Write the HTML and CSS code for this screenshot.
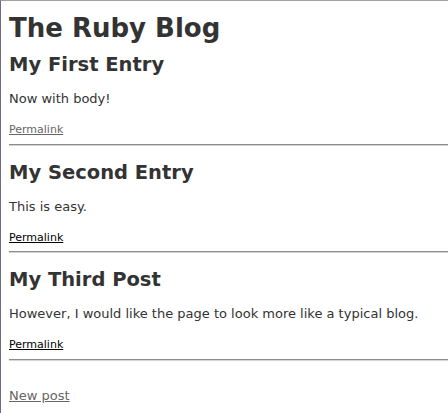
FILE: index.html
```html
<!DOCTYPE html>
<html>
<head>
<meta charset="utf-8">
<title>The Ruby Blog</title>
<link rel="stylesheet" href="styles.css">
</head>
<body>
<h1 class="title">The Ruby Blog</h1>

<div class="entry">
  <h2 class="entry-title">My First Entry</h2>
  <p class="entry-body">Now with body!</p>
  <div class="entry-link"><a class="visited" href="#">Permalink</a></div>
  <hr class="divider">
</div>

<div class="entry">
  <h2 class="entry-title">My Second Entry</h2>
  <p class="entry-body">This is easy.</p>
  <div class="entry-link"><a href="#">Permalink</a></div>
  <hr class="divider">
</div>

<div class="entry">
  <h2 class="entry-title">My Third Post</h2>
  <p class="entry-body">However, I would like the page to look more like a typical blog.</p>
  <div class="entry-link"><a href="#">Permalink</a></div>
  <hr class="divider">
</div>

<p class="new-post"><a class="visited" href="#">New post</a></p>
</body>
</html>
```

FILE: styles.css
```css
html {
  margin: 0;
  padding: 0;
  background: #fff;
}

body {
  margin: 0;
  min-height: 100vh;
  box-sizing: border-box;
  padding: 8px 0 0 8px;
  border-top: 1px solid #a0a0a0;
  border-left: 1px solid #6e6e82;
  background: #fff;
  color: #333;
  font-family: "DejaVu Sans", Verdana, sans-serif;
  font-size: 13px;
  line-height: 18px;
}

.title {
  font-size: 26px;
  font-weight: bold;
  line-height: 18px;
  margin: 10px 0 19px;
}

.entry-title {
  font-size: 19.5px;
  font-weight: bold;
  line-height: 18px;
  margin: 18px 0 16px;
}

.entry-body {
  margin: 13px 0;
}

.entry-link {
  font-size: 11px;
  line-height: 18px;
}

a {
  color: #000;
}

a.visited {
  color: #666;
}

.divider {
  margin: 4.5px 0 6.5px;
  height: 0;
  border: 0;
  border-top: 1px solid #8c8c8c;
  border-bottom: 1px solid #d4d4d4;
}

.new-post {
  margin: 26px 0 0;
}
```
